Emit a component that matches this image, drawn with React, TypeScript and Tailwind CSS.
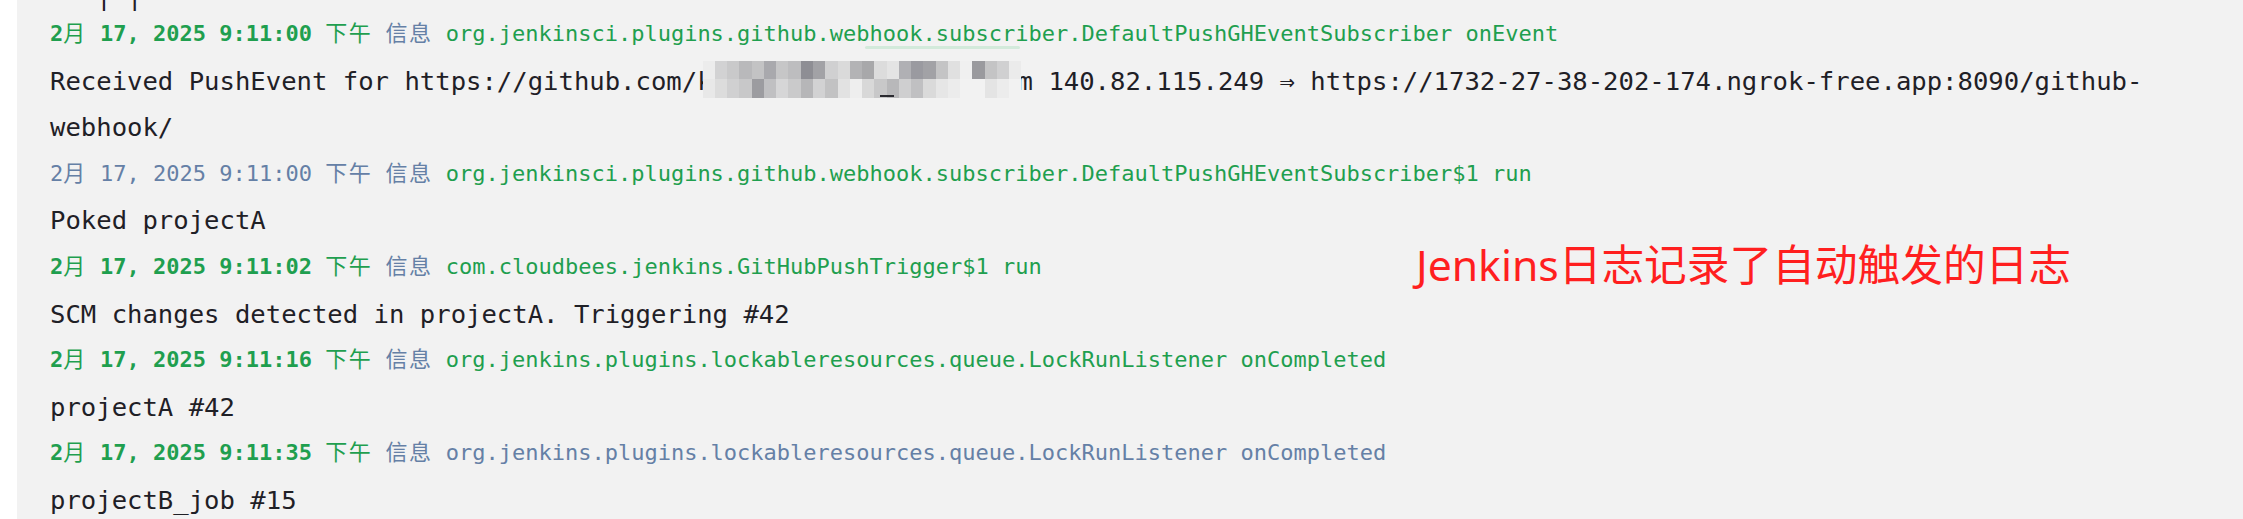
const MONO = "font-['DejaVu_Sans_Mono','Noto_Sans_CJK_SC',monospace]";
const GREEN = "text-[#1f9f4f]";
const SLATE = "text-[#6580a6]";

// mosaic cells covering the repo name in the first message
const topRow = [
  "bg-[#ececec]", "bg-[#d2d2d3]", "bg-[#c9c9ca]", "bg-[#b9b9bb]", "bg-[#c3c3c4]", "bg-[#a9a9ad]",
  "bg-[#c6c6c7]", "bg-[#bdbdbf]", "bg-[#8e8e94]", "bg-[#a2a2a6]", "bg-[#d0d0d1]", "bg-[#dadada]",
  "bg-[#b3b3b5]", "bg-[#a8a8aa]", "bg-[#dcdcdc]", "bg-[#e4e4e4]", "bg-[#b0b0b4]", "bg-[#9a9aa0]",
  "bg-[#a2a2a6]", "bg-[#c4c4c5]", "bg-[#e0e0e0]", "bg-[#f0f0f0]", "bg-[#9a9a9e]", "bg-[#c4c4c5]",
  "bg-[#d0d0d1]", "bg-[#ebebeb]",
];
const bottomRow = [
  "bg-[#e8e8e8]", "bg-[#dcdcdc]", "bg-[#d0d0d1]", "bg-[#c8c8c9]", "bg-[#9c9ca0]", "bg-[#c0c0c2]",
  "bg-[#d6d6d7]", "bg-[#cacacb]", "bg-[#b6b6b8]", "bg-[#d2d2d3]", "bg-[#c2c2c3]", "bg-[#e2e2e2]",
  "bg-[#eeeeee]", "bg-[#d8d8d8]", "bg-[#c8c8c9]", "bg-[#b8b8ba]", "bg-[#cfcfd0]", "bg-[#c0c0c2]",
  "bg-[#dadada]", "bg-[#e6e6e6]", "bg-[#ececec]", "bg-[#f2f2f2]", "bg-[#f2f2f2]", "bg-[#e4e4e4]",
  "bg-[#ececec]", "bg-[#f2f2f2]",
];

// zero-height inline box on the baseline, so the pixelation doesn't grow the line
const Mosaic = () => (
  <span className="relative z-10 -ml-[10px] -mr-[4px] inline-block h-0 w-[319px]">
    <span className="absolute left-0 top-[-29px] flex h-[37px] w-full flex-col">
      <span className="flex h-1/2">
        {topRow.map((c, i) => (
          <span key={i} className={`flex-1 ${c}`} />
        ))}
      </span>
      <span className="flex h-1/2">
        {bottomRow.map((c, i) => (
          <span key={i} className={`flex-1 ${c}`} />
        ))}
      </span>
      <span className="absolute left-[177px] top-[34px] h-[2px] w-[14px] bg-[#2a2a30]" />
    </span>
  </span>
);

type MetaProps = {
  time: string;
  tsGreen: boolean;
  src: string;
  srcGreen: boolean;
};

const Meta = ({ time, tsGreen, src, srcGreen }: MetaProps) => {
  const ts = tsGreen ? GREEN : SLATE;
  const num = tsGreen ? `${GREEN} font-semibold` : SLATE;
  return (
    <div className="whitespace-pre text-[22px] leading-[46.6px]">
      <span className={num}>2</span>
      <span className={`${ts} tracking-[1.5px]`}>月</span>
      <span className={num}>{` 17, 2025 ${time} `}</span>
      <span className={`${ts} tracking-[1.5px]`}>下午</span>
      {" "}
      <span className={`${SLATE} tracking-[1.5px]`}>信息</span>
      {" "}
      <span className={srcGreen ? GREEN : SLATE}>{src}</span>
    </div>
  );
};

const Msg = ({ children }: { children: React.ReactNode }) => (
  <div className="whitespace-pre text-[25.6px] leading-[46.6px] text-[#1f2026]">{children}</div>
);

export default function App() {
  return (
    <div className="min-h-screen bg-white pl-[17px]">
      <div className={`relative h-screen overflow-hidden bg-[#f2f2f2] pl-[33px] ${MONO}`}>
        {/* tail of the record above, cut by the top edge */}
        <div className="h-[11px] overflow-hidden">
          <div className="-mt-[18px] whitespace-pre text-[25.6px] leading-[30px] text-[#1f2026]">{"   |_|  _"}</div>
        </div>

        <div className="relative">
          <Meta
            time="9:11:00"
            tsGreen
            src="org.jenkinsci.plugins.github.webhook.subscriber.DefaultPushGHEventSubscriber onEvent"
            srcGreen
          />
          <span className="absolute left-[815px] top-[35px] h-[3px] w-[155px] rounded-full bg-[#d3eadb]" />
        </div>
        <Msg>
          {"Received PushEvent for https://github.com/k"}
          <Mosaic />
          {"m 140.82.115.249 ⇒ https://1732-27-38-202-174.ngrok-free.app:8090/github-"}
        </Msg>
        <Msg>webhook/</Msg>

        <Meta
          time="9:11:00"
          tsGreen={false}
          src="org.jenkinsci.plugins.github.webhook.subscriber.DefaultPushGHEventSubscriber$1 run"
          srcGreen
        />
        <Msg>Poked projectA</Msg>

        <Meta time="9:11:02" tsGreen src="com.cloudbees.jenkins.GitHubPushTrigger$1 run" srcGreen />
        <Msg>SCM changes detected in projectA. Triggering #42</Msg>

        <Meta
          time="9:11:16"
          tsGreen
          src="org.jenkins.plugins.lockableresources.queue.LockRunListener onCompleted"
          srcGreen
        />
        <Msg>projectA #42</Msg>

        <Meta
          time="9:11:35"
          tsGreen
          src="org.jenkins.plugins.lockableresources.queue.LockRunListener onCompleted"
          srcGreen={false}
        />
        <Msg>projectB_job #15</Msg>

        {/* red annotation laid over the log */}
        <div className="absolute left-[1399px] top-[244px] whitespace-nowrap font-['Noto_Sans','Noto_Sans_CJK_SC',sans-serif] text-[42.7px] leading-none text-[#ff1f1f]">
          Jenkins日志记录了自动触发的日志
        </div>
      </div>
    </div>
  );
}
